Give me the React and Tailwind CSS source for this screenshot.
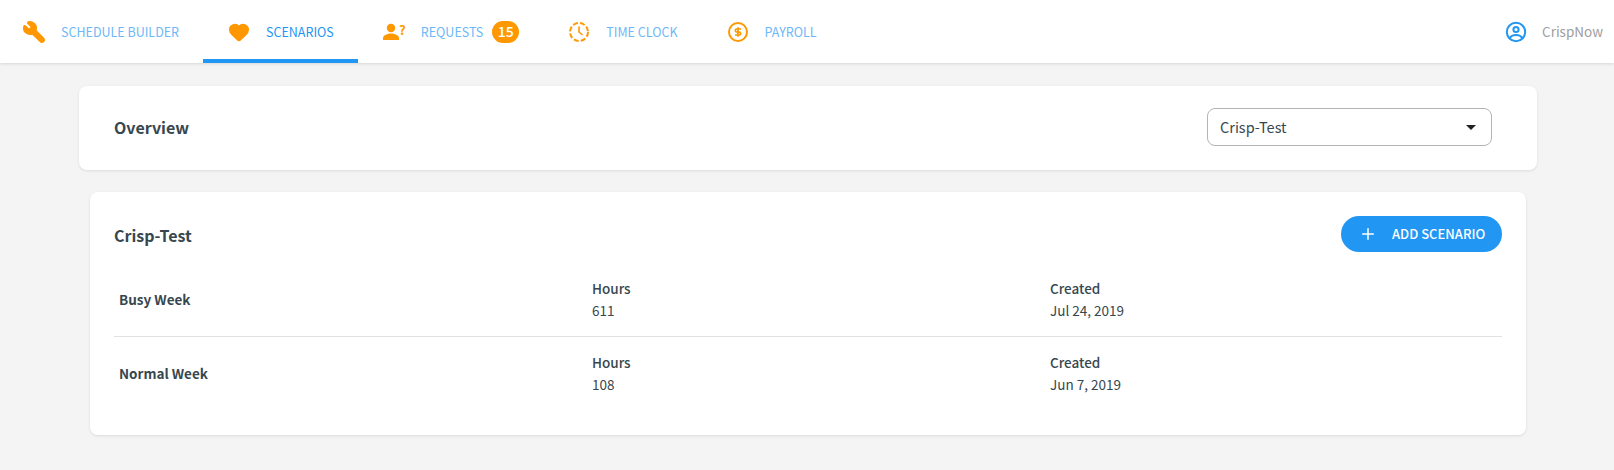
import { Heart, Plus, Wrench } from "lucide-react";

const font = "font-['Noto_Sans_CJK_SC','Noto_Sans',sans-serif]";

function ClockIcon() {
  return (
    <svg width="24" height="24" viewBox="0 0 24 24" fill="none" stroke="#ff9800" strokeWidth="2">
      <circle cx="12" cy="12" r="9" strokeDasharray="5 2.2" />
      <path d="M12 6.5V12l3.5 3" strokeWidth="1.6" />
    </svg>
  );
}

function DollarIcon() {
  return (
    <svg width="24" height="24" viewBox="0 0 24 24" fill="none" stroke="#ff9800" strokeWidth="2">
      <circle cx="12" cy="12" r="9" />
      <path d="M15 9h-4.2a1.5 1.5 0 0 0 0 3h2.4a1.5 1.5 0 0 1 0 3H9M12 7.2v9.6" strokeWidth="1.7" />
    </svg>
  );
}

function RequestIcon() {
  return (
    <svg width="24" height="24" viewBox="0 0 24 24" fill="#ff9800">
      <circle cx="9" cy="8" r="4.2" />
      <path d="M1 20v-2c0-3 5-4.6 8-4.6s8 1.6 8 4.6v2z" />
      <text x="17" y="15" fontSize="13" fontWeight="700" fontFamily="Noto Sans CJK SC, sans-serif">?</text>
    </svg>
  );
}

function UserIcon() {
  return (
    <svg width="24" height="24" viewBox="0 0 24 24" fill="none" stroke="#2196f3" strokeWidth="2">
      <circle cx="12" cy="12" r="9.2" />
      <circle cx="12" cy="9.5" r="2.6" />
      <path d="M5.8 18c1.2-2.2 3.6-3 6.2-3s5 .8 6.2 3" />
    </svg>
  );
}

function Tab({ icon, label, active, badge, className = "" }) {
  return (
    <div className={`flex h-[63px] items-center gap-[15px] border-b-4 px-6 pt-1 ${active ? "border-[#2196f3] text-[#2196f3]" : "border-transparent text-[#6db8f7]"} ${className}`}>
      <span className="flex w-6 justify-center">{icon}</span>
      <span className="text-[12.5px] leading-5">{label}</span>
      {badge && (
        <span className="-ml-[6px] flex h-[22px] w-[27px] items-center justify-center rounded-full bg-[#ff9800] text-[14px] font-medium text-white">
          {badge}
        </span>
      )}
    </div>
  );
}

function ScenarioRow({ name, hours, created, className }) {
  return (
    <div className={`flex items-center ${className}`}>
      <div className="w-[478px] pl-[5px] text-[13.5px] font-bold">{name}</div>
      <div className="w-[458px] text-[13.5px] leading-[22px]">
        <div className="font-medium">Hours</div>
        <div>{hours}</div>
      </div>
      <div className="text-[13.5px] leading-[22px]">
        <div className="font-medium">Created</div>
        <div>{created}</div>
      </div>
    </div>
  );
}

export default function App() {
  return (
    <div className={`${font} h-[470px] overflow-hidden bg-[#f4f4f4] text-[#37474f]`}>
      <header className="flex h-[63px] items-center justify-between bg-white shadow-[0_1px_3px_rgba(0,0,0,0.12)]">
        <nav className="flex">
          <Tab className="-ml-[2px]" icon={<Wrench size={24} fill="#ff9800" stroke="#ff9800" strokeWidth={2} className="-scale-x-100" />} label="SCHEDULE BUILDER" />
          <Tab active icon={<Heart size={22} fill="#ff9800" stroke="#ff9800" />} label="SCENARIOS" />
          <Tab icon={<RequestIcon />} label="REQUESTS" badge="15" />
          <Tab icon={<ClockIcon />} label="TIME CLOCK" />
          <Tab icon={<DollarIcon />} label="PAYROLL" />
        </nav>
        <div className="flex items-center gap-[14px] pr-[11px]">
          <UserIcon />
          <span className="text-[13.5px] text-[#9e9e9e]">CrispNow</span>
        </div>
      </header>

      <section className="ml-[79px] mr-[77px] mt-[23px] flex h-[84px] items-center justify-between rounded-lg bg-white pl-[35px] pr-[45px] shadow-[0_1px_3px_rgba(0,0,0,0.1)]">
        <h2 className="mb-[3px] text-[16px] font-bold">Overview</h2>
        <div className="mb-[2px] flex h-[38px] w-[285px] items-center justify-between rounded-lg border border-[#b4b4b4] pl-[12px] pr-[15px] text-[14.5px]">
          <span>Crisp-Test</span>
          <span className="h-0 w-0 border-x-[5px] border-t-[5px] border-x-transparent border-t-[#212121]" />
        </div>
      </section>

      <section className="ml-[90px] mr-[88px] mt-[22px] h-[243px] rounded-lg bg-white px-[24px] pt-[24px] shadow-[0_1px_3px_rgba(0,0,0,0.1)]">
        <div className="mb-[10px] flex h-[36px] items-center justify-between">
          <h2 className="pt-[1px] text-[16px] font-bold">Crisp-Test</h2>
          <button className="flex h-[36px] w-[161px] items-center gap-[15px] rounded-full bg-[#2196f3] pl-[18px] text-[13px] font-medium text-white">
            <Plus size={18} strokeWidth={2} />
            ADD SCENARIO
          </button>
        </div>
        <ScenarioRow className="h-[75px] border-b border-[#e2e2e2]" name="Busy Week" hours="611" created="Jul 24, 2019" />
        <ScenarioRow className="h-[72px]" name="Normal Week" hours="108" created="Jun 7, 2019" />
      </section>
    </div>
  );
}
